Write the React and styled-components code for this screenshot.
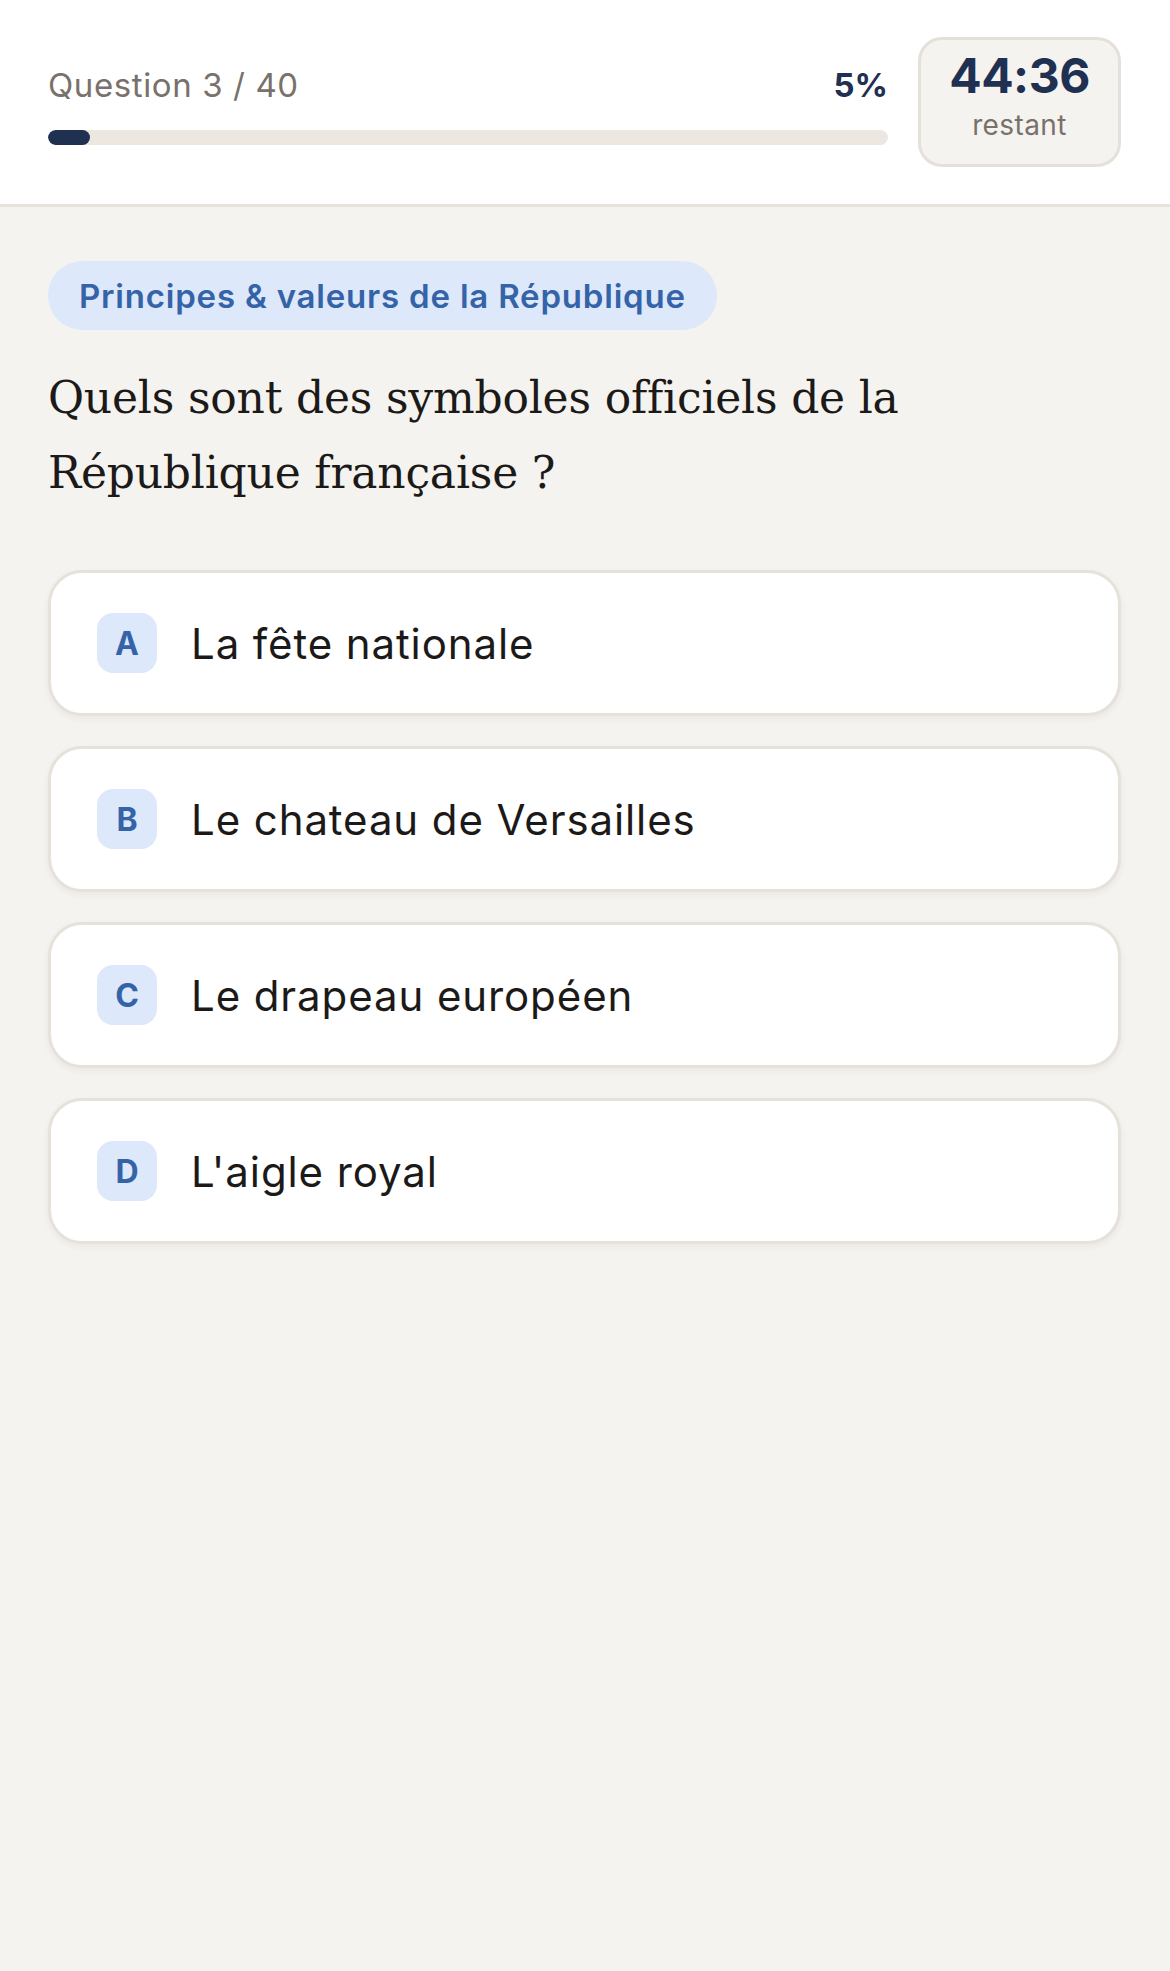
import React from "react";
import styled, { createGlobalStyle } from "styled-components";

const GlobalStyle = createGlobalStyle`
  html, body {
    margin: 0;
    padding: 0;
    background: #f5f3ef;
  }
  body {
    font-family: Inter, "Noto Sans", sans-serif;
    color: #1c1a18;
  }
`;

const Page = styled.div`
  min-height: 1971px;
  background: #f5f3ef;
`;

const Header = styled.header`
  background: #ffffff;
  border-bottom: 3px solid #e7e2dc;
  padding: 37px 49px 37px 48px;
  display: flex;
  align-items: center;
  gap: 30px;
`;

const ProgressColumn = styled.div`
  flex: 1;
  display: flex;
  flex-direction: column;
  gap: 28px;
  padding-top: 10px;
`;

const ProgressRow = styled.div`
  display: flex;
  justify-content: space-between;
  align-items: baseline;
`;

const Label = styled.span`
  font-size: 33px;
  line-height: 1;
  color: #79716b;
  letter-spacing: 0.6px;
`;

const Percent = styled.span`
  font-size: 33px;
  line-height: 1;
  font-weight: 700;
  color: #1f3050;
`;

const Track = styled.div`
  height: 15px;
  border-radius: 8px;
  background: #ece8e1;
  overflow: hidden;
`;

const Fill = styled.div`
  height: 100%;
  border-radius: 8px;
  background: #1f3050;
`;

const Timer = styled.div`
  width: 203px;
  height: 130px;
  box-sizing: border-box;
  border: 3px solid #e5e0d9;
  border-radius: 24px;
  background: #f5f3ef;
  padding-bottom: 12px;
  display: flex;
  flex-direction: column;
  align-items: center;
  justify-content: center;
`;

const Time = styled.span`
  font-size: 48px;
  font-weight: 700;
  color: #1f3050;
  line-height: 1;
  letter-spacing: -0.5px;
`;

const Remaining = styled.span`
  font-size: 28px;
  color: #79716b;
  margin-top: 10px;
  line-height: 1.1;
  letter-spacing: 0.4px;
`;

const Main = styled.main`
  padding: 54px 49px 48px 48px;
`;

const Tag = styled.span`
  display: inline-flex;
  align-items: center;
  height: 69px;
  padding: 0 31px;
  border-radius: 35px;
  background: #dde8fa;
  color: #3563a8;
  font-size: 33px;
  font-weight: 600;
  letter-spacing: 0.8px;
`;

const Question = styled.h1`
  margin: 30px 0 60px;
  font-family: "DejaVu Serif", "Liberation Serif", serif;
  font-weight: 400;
  font-size: 44px;
  line-height: 75px;
  letter-spacing: -0.2px;
  color: #1c1a18;
`;

const Options = styled.div`
  display: flex;
  flex-direction: column;
  gap: 30px;
`;

const Option = styled.button`
  display: flex;
  align-items: center;
  gap: 34px;
  width: 100%;
  height: 146px;
  box-sizing: border-box;
  padding: 0 46px;
  background: #ffffff;
  border: 3px solid #e6e1db;
  border-radius: 34px;
  box-shadow: 0 3px 6px rgba(60, 50, 40, 0.06);
  font-family: inherit;
  text-align: left;
  cursor: pointer;
`;

const Badge = styled.span`
  flex: none;
  width: 60px;
  height: 60px;
  border-radius: 16px;
  background: #dde8fa;
  color: #3563a8;
  font-size: 32px;
  font-weight: 700;
  display: flex;
  align-items: center;
  justify-content: center;
`;

const OptionText = styled.span`
  font-size: 42px;
  color: #1c1a18;
  letter-spacing: 0.9px;
`;

const answers = [
  { key: "A", text: "La fête nationale" },
  { key: "B", text: "Le chateau de Versailles" },
  { key: "C", text: "Le drapeau européen" },
  { key: "D", text: "L'aigle royal" },
];

export default function App() {
  const progress = 5;
  return (
    <Page>
      <GlobalStyle />
      <Header>
        <ProgressColumn>
          <ProgressRow>
            <Label>Question 3 / 40</Label>
            <Percent>{progress}%</Percent>
          </ProgressRow>
          <Track>
            <Fill style={{ width: `${progress}%` }} />
          </Track>
        </ProgressColumn>
        <Timer>
          <Time>44:36</Time>
          <Remaining>restant</Remaining>
        </Timer>
      </Header>
      <Main>
        <Tag>Principes &amp; valeurs de la République</Tag>
        <Question>
          Quels sont des symboles officiels de la République française ?
        </Question>
        <Options>
          {answers.map((a) => (
            <Option key={a.key}>
              <Badge>{a.key}</Badge>
              <OptionText>{a.text}</OptionText>
            </Option>
          ))}
        </Options>
      </Main>
    </Page>
  );
}
